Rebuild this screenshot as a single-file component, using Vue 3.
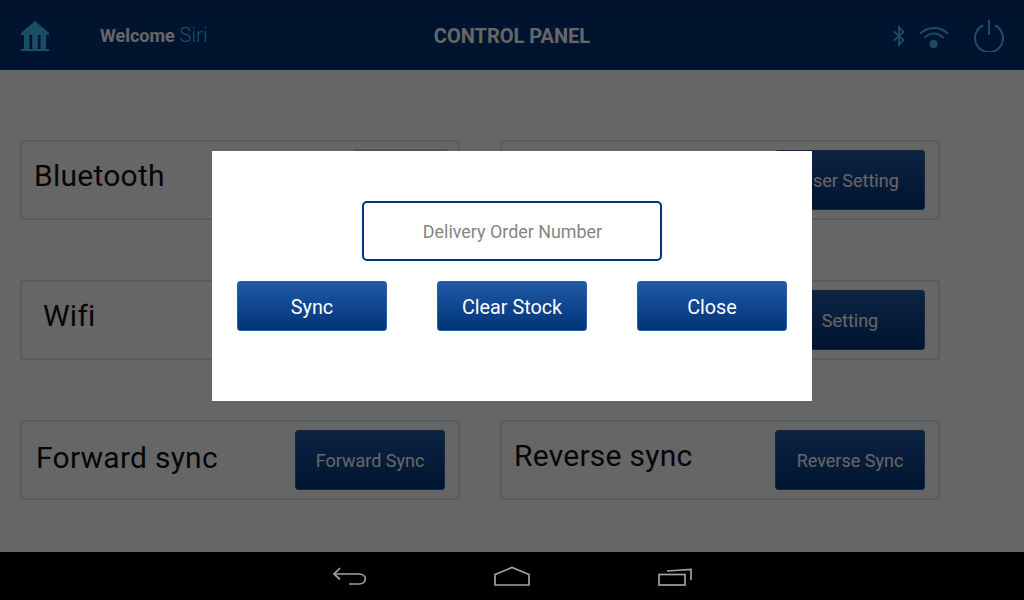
<script setup>
const rows = [
  { left: { label: 'Bluetooth', cls: 'l-bt', toggle: true }, right: { btn: 'User Setting' } },
  { left: { label: 'Wifi', cls: 'l-wifi' }, right: { btn: 'Setting' } },
  { left: { label: 'Forward sync', cls: 'l-fwd', btn: 'Forward Sync' }, right: { label: 'Reverse sync', cls: 'l-rev', btn: 'Reverse Sync' } }
]
</script>

<template>
  <div class="screen">
    <header class="top">
      <svg class="bank" width="30" height="32" viewBox="0 0 30 32">
        <path d="M15 0 L29 12 V14 H1 V12 Z" fill="#44c0ff" />
        <path d="M4 14h5.500v14H4zM12.200 14h5.600v14h-5.600zM20.500 14H26v14h-5.500z" fill="#44c0ff" />
        <rect x="1" y="28" width="28" height="2" fill="#44c0ff" />
      </svg>
      <div class="welcome"><b>Welcome</b> <span>Siri</span></div>
      <div class="title">CONTROL PANEL</div>
      <div class="status">
        <svg class="bt" width="12" height="22" viewBox="0 0 12 22" fill="none" stroke="#44c0ff" stroke-width="1.800">
          <path d="M1 6.500 L10.500 15 L6 20 V2 L10.500 7 L1 15.500" />
        </svg>
        <svg class="wifi" width="30" height="24" viewBox="0 0 30 24" fill="none" stroke="#44c0ff" stroke-width="1.800">
          <path d="M1 9 C8 1 22 1 29 9" />
          <path d="M5.500 13 C10.500 7 19.500 7 24.500 13" />
          <circle cx="14.500" cy="19" r="4" fill="#44c0ff" stroke="none" />
        </svg>
        <svg class="power" width="30" height="32" viewBox="0 0 30 32" fill="none" stroke="#44c0ff" stroke-width="2">
          <path d="M9 5.500 A14 14 0 1 0 21 5.500" />
          <path d="M15 0 V15" />
        </svg>
      </div>
    </header>

    <main class="panel">
      <div v-for="(row, i) in rows" :key="i" class="row">
        <section v-for="side in ['left', 'right']" :key="side" class="card">
          <span v-if="row[side].label" class="label" :class="row[side].cls">{{ row[side].label }}</span>
          <div v-if="row[side].toggle" class="toggle"></div>
          <button v-if="row[side].btn" class="btn card-btn">{{ row[side].btn }}</button>
        </section>
      </div>
    </main>

    <nav class="nav">
      <svg width="36" height="22" viewBox="0 0 36 22" fill="none" stroke="#a0a0a0" stroke-width="1.700">
        <path d="M8 3 L2 9 L8 14.500" />
        <path d="M2 9 H27 C35.500 9 35.500 19 27 19 H17" />
      </svg>
      <svg width="36" height="22" viewBox="0 0 36 22" fill="none" stroke="#a0a0a0" stroke-width="1.700">
        <path d="M1 9.500 L18 2.500 L35 9.500 V20 H1 Z" />
      </svg>
      <svg width="36" height="22" viewBox="0 0 36 22" fill="none" stroke="#a0a0a0" stroke-width="1.700">
        <rect x="3" y="9.500" width="26" height="10.500" />
        <path d="M11 6 L35 4.500 V15" />
      </svg>
    </nav>

    <div class="overlay"></div>

    <div class="dialog">
      <div class="field">Delivery Order Number</div>
      <div class="actions">
        <button class="btn dlg-btn">Sync</button>
        <button class="btn dlg-btn">Clear Stock</button>
        <button class="btn dlg-btn">Close</button>
      </div>
    </div>
  </div>
</template>

<style scoped>
.screen {
  position: relative;
  width: 1024px;
  height: 600px;
  overflow: hidden;
  display: flex;
  flex-direction: column;
  background: #fff;
  font-family: Roboto, "Liberation Sans", sans-serif;
}
.top {
  height: 70px;
  flex: none;
  box-sizing: border-box;
  display: flex;
  align-items: center;
  padding: 0 20px;
  position: relative;
  background: #003478;
  border-top: 1px solid #00245a;
  color: #fff;
}
.bank { flex: none; margin-top: 2px; }
.welcome {
  margin-left: 50px;
  margin-top: -2px;
  font-size: 18px;
  color: #fff;
}
.welcome b { font-weight: 700; }
.welcome span { font-size: 20.500px; font-weight: 300; color: #44c0ff; }
.title {
  position: absolute;
  left: 0;
  right: 0;
  text-align: center;
  font-size: 20px;
  font-weight: 700;
  padding-top: 1px;
  pointer-events: none;
}
.status {
  margin-left: auto;
  display: flex;
  align-items: center;
}
.bt { margin-right: 14px; margin-left: 1px; }
.wifi { margin-right: 25px; margin-top: 2px; }
.panel {
  flex: 1;
  box-sizing: border-box;
  padding: 70px 84px 0 20px;
  display: flex;
  flex-direction: column;
  gap: 60px;
}
.row {
  display: grid;
  grid-template-columns: 440px 440px;
  gap: 40px;
}
.card {
  height: 80px;
  box-sizing: border-box;
  border: 2px solid #dde6f0;
  border-radius: 2px;
  display: flex;
  align-items: center;
  justify-content: flex-end;
  padding-right: 13px;
  position: relative;
}
.label {
  margin-right: auto;
  font-size: 30px;
  letter-spacing: 0.25px;
  color: #111;
}
.l-bt { margin-left: 12px; margin-top: -10px; }
.l-wifi { margin-left: 21px; margin-top: -10px; }
.l-fwd { margin-left: 14px; margin-top: -5px; }
.l-rev { margin-left: 12px; margin-top: -9px; }
.toggle {
  width: 96px;
  height: 60px;
  background: #d8d0c8;
  border-radius: 3px;
  position: absolute;
  left: 331px;
  top: 7px;
}
.btn {
  font-family: inherit;
  color: #fff;
  border: 1px solid #2c5f9e;
  border-radius: 3px;
  background: linear-gradient(#2059a8, #003478);
  padding: 0;
}
.card-btn {
  width: 150px;
  height: 60px;
  font-size: 18px;
}
.nav {
  height: 48px;
  flex: none;
  background: #000;
  display: flex;
  align-items: center;
  justify-content: center;
  gap: 126px;
  position: relative;
  z-index: 2;
}
.overlay {
  position: absolute;
  inset: 0;
  background: rgba(0, 0, 0, 0.6);
}
.dialog {
  position: absolute;
  left: 212px;
  top: 151px;
  width: 600px;
  height: 250px;
  box-sizing: border-box;
  padding-top: 50px;
  background: #fff;
  display: flex;
  flex-direction: column;
  align-items: center;
}
.field {
  width: 300px;
  height: 60px;
  box-sizing: border-box;
  border: 2px solid #003478;
  border-radius: 5px;
  padding: 1px 0 0 1px;
  display: flex;
  align-items: center;
  justify-content: center;
  font-size: 17.900px;
  color: #858585;
}
.actions {
  margin-top: 20px;
  width: 550px;
  display: flex;
  justify-content: space-between;
}
.dlg-btn {
  width: 150px;
  height: 50px;
  padding-top: 2px;
  font-size: 19.800px;
}
</style>
